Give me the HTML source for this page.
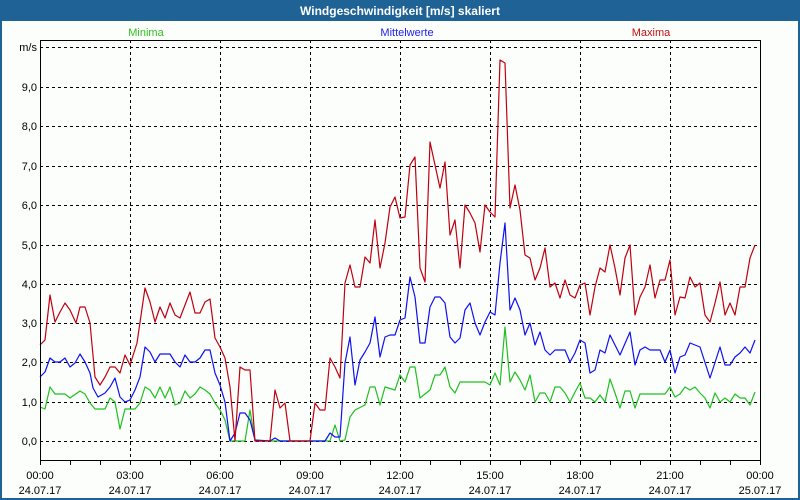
<!DOCTYPE html>
<html><head><meta charset="utf-8"><style>
html,body{margin:0;padding:0;background:#fff}
svg{display:block}
text{font-family:"Liberation Sans","DejaVu Sans",sans-serif;font-size:11px}
</style></head><body>
<svg width="800" height="500" viewBox="0 0 800 500" xmlns="http://www.w3.org/2000/svg">
<rect x="0" y="0" width="800" height="500" fill="#fcfefc"/>
<rect x="0" y="0" width="800" height="21" fill="#1e6296"/>
<rect x="0" y="0" width="2" height="500" fill="#1e6296"/>
<rect x="798" y="0" width="2" height="500" fill="#1e6296"/>
<rect x="0" y="498" width="800" height="2" fill="#1e6296"/>
<text x="400" y="15" text-anchor="middle" fill="#fff" font-weight="bold" style="font-size:12px">Windgeschwindigkeit [m/s] skaliert</text>
<text x="146" y="36" text-anchor="middle" fill="#30c020">Minima</text>
<text x="407" y="36" text-anchor="middle" fill="#2020f0">Mittelwerte</text>
<text x="651" y="36" text-anchor="middle" fill="#c01010">Maxima</text>
<g stroke="#000" stroke-width="1" stroke-dasharray="3,3" shape-rendering="crispEdges">
<line x1="40" y1="47.5" x2="760" y2="47.5"/>
<line x1="40" y1="87.5" x2="760" y2="87.5"/>
<line x1="40" y1="126.5" x2="760" y2="126.5"/>
<line x1="40" y1="166.5" x2="760" y2="166.5"/>
<line x1="40" y1="205.5" x2="760" y2="205.5"/>
<line x1="40" y1="245.5" x2="760" y2="245.5"/>
<line x1="40" y1="284.5" x2="760" y2="284.5"/>
<line x1="40" y1="323.5" x2="760" y2="323.5"/>
<line x1="40" y1="362.5" x2="760" y2="362.5"/>
<line x1="40" y1="402.5" x2="760" y2="402.5"/>
<line x1="40" y1="441.5" x2="760" y2="441.5"/>
<line x1="130.5" y1="40" x2="130.5" y2="460"/>
<line x1="220.5" y1="40" x2="220.5" y2="460"/>
<line x1="310.5" y1="40" x2="310.5" y2="460"/>
<line x1="400.5" y1="40" x2="400.5" y2="460"/>
<line x1="490.5" y1="40" x2="490.5" y2="460"/>
<line x1="580.5" y1="40" x2="580.5" y2="460"/>
<line x1="670.5" y1="40" x2="670.5" y2="460"/>
</g>
<g fill="none" stroke-width="1.2" stroke-linejoin="round">
<polyline stroke="#20c020" points="40,407 45,409 50,387 55,394 65,394 70,398 80,391 85,394 90,403 95,409 105,409 110,398 115,402 120,429 125,409 135,409 140,403 145,387 150,390 155,398 160,387 165,398 170,387 175,405 180,403 185,391 190,398 195,394 200,387 205,390 210,394 215,403 220,410 225,420 230,441 245,441 250,410 255,441 330,441 335,425 340,441 345,440 350,417 355,410 365,405 370,387 375,387 380,405 385,387 395,390 400,375 405,382 410,367 415,367 420,398 430,390 435,375 440,375 445,367 450,387 455,393 460,382 485,382 490,385 495,373 500,385 505,327 510,382 515,372 520,380 525,390 530,375 535,402 540,393 545,393 550,402 555,387 560,387 565,393 570,402 575,392 580,383 585,398 590,398 595,402 600,395 605,402 610,379 615,393 620,408 625,391 630,391 635,408 640,394 665,394 670,387 675,397 680,394 685,387 690,390 695,387 700,393 705,398 710,408 715,393 720,402 725,398 730,402 735,394 740,398 745,398 750,405 755,392"/>
<polyline stroke="#1010f0" points="40,377 45,372 50,358 55,362 60,362 65,358 70,367 75,363 80,354 85,362 90,373 93,388 98,397 105,393 110,387 115,378 120,397 125,402 130,400 135,390 140,377 145,347 150,352 155,362 160,354 170,354 175,362 180,367 185,355 190,362 195,362 200,358 205,350 210,350 215,373 220,385 225,402 230,441 235,433 240,413 245,413 250,420 255,440 270,441 275,438 280,441 325,441 330,433 335,437 340,437 345,363 350,337 355,385 360,360 365,352 370,343 375,317 380,357 385,337 390,335 395,335 400,320 405,318 410,277 415,297 420,343 425,343 430,307 435,297 440,297 445,303 450,337 455,343 460,338 465,310 470,303 475,323 480,335 485,322 490,312 495,315 500,263 505,223 510,310 515,298 520,310 525,335 530,323 535,345 540,332 545,350 550,355 555,350 565,350 570,362 575,353 580,340 585,343 590,373 595,370 600,350 605,353 610,335 620,355 630,332 635,365 640,350 645,347 650,350 660,350 665,362 670,350 675,373 680,357 685,355 690,343 700,347 710,378 720,347 725,365 730,365 735,357 740,353 745,347 750,353 755,340"/>
<polyline stroke="#c00010" points="40,345 45,340 50,295 55,322 60,312 65,303 70,310 76,323 80,307 85,307 90,323 95,377 100,385 105,377 110,367 115,367 120,373 125,355 130,365 137,343 145,288 150,302 155,322 160,307 165,318 170,303 175,315 180,318 190,292 195,313 200,313 205,302 210,299 215,338 220,347 225,358 230,387 235,441 240,367 245,370 250,370 255,441 270,441 275,390 280,408 285,403 290,441 310,441 315,403 320,410 325,410 330,358 335,367 340,378 345,283 350,265 355,287 360,287 365,257 370,263 375,220 380,268 385,243 390,207 395,197 400,218 405,217 410,165 415,157 420,268 425,282 430,142 435,165 440,188 445,162 450,235 455,220 460,268 465,205 470,213 475,223 480,252 485,205 490,212 495,217 500,60 505,63 510,208 515,185 520,210 525,255 530,258 535,280 540,268 545,248 550,287 555,283 560,298 565,280 570,295 575,298 580,285 585,283 590,315 595,287 600,268 605,272 610,245 615,268 620,295 625,258 630,245 635,315 640,297 645,287 650,265 655,298 660,280 665,280 670,260 675,315 680,297 685,298 690,277 695,287 700,283 705,315 710,322 715,303 720,282 725,315 730,303 735,315 740,287 745,287 750,258 755,245"/>
</g>
<rect x="40.5" y="40.5" width="720" height="420" fill="none" stroke="#000" stroke-width="1" shape-rendering="crispEdges"/>
<g stroke="#000" stroke-width="1" shape-rendering="crispEdges">
<line x1="70.5" y1="460" x2="70.5" y2="465"/><line x1="100.5" y1="460" x2="100.5" y2="465"/><line x1="130.5" y1="460" x2="130.5" y2="465"/><line x1="160.5" y1="460" x2="160.5" y2="465"/><line x1="190.5" y1="460" x2="190.5" y2="465"/><line x1="220.5" y1="460" x2="220.5" y2="465"/><line x1="250.5" y1="460" x2="250.5" y2="465"/><line x1="280.5" y1="460" x2="280.5" y2="465"/><line x1="310.5" y1="460" x2="310.5" y2="465"/><line x1="340.5" y1="460" x2="340.5" y2="465"/><line x1="370.5" y1="460" x2="370.5" y2="465"/><line x1="400.5" y1="460" x2="400.5" y2="465"/><line x1="430.5" y1="460" x2="430.5" y2="465"/><line x1="460.5" y1="460" x2="460.5" y2="465"/><line x1="490.5" y1="460" x2="490.5" y2="465"/><line x1="520.5" y1="460" x2="520.5" y2="465"/><line x1="550.5" y1="460" x2="550.5" y2="465"/><line x1="580.5" y1="460" x2="580.5" y2="465"/><line x1="610.5" y1="460" x2="610.5" y2="465"/><line x1="640.5" y1="460" x2="640.5" y2="465"/><line x1="670.5" y1="460" x2="670.5" y2="465"/><line x1="700.5" y1="460" x2="700.5" y2="465"/><line x1="730.5" y1="460" x2="730.5" y2="465"/><line x1="40.5" y1="460" x2="40.5" y2="465"/><line x1="760.5" y1="460" x2="760.5" y2="465"/>
</g>
<g fill="#000" text-anchor="end">
<text x="37" y="51">m/s</text>
<text x="37" y="91">9,0</text>
<text x="37" y="130">8,0</text>
<text x="37" y="170">7,0</text>
<text x="37" y="209">6,0</text>
<text x="37" y="249">5,0</text>
<text x="37" y="288">4,0</text>
<text x="37" y="327">3,0</text>
<text x="37" y="366">2,0</text>
<text x="37" y="406">1,0</text>
<text x="37" y="445">0,0</text>
</g>
<g fill="#000" text-anchor="middle">
<text x="40" y="479">00:00</text><text x="40" y="494">24.07.17</text>
<text x="130" y="479">03:00</text><text x="130" y="494">24.07.17</text>
<text x="220" y="479">06:00</text><text x="220" y="494">24.07.17</text>
<text x="310" y="479">09:00</text><text x="310" y="494">24.07.17</text>
<text x="400" y="479">12:00</text><text x="400" y="494">24.07.17</text>
<text x="490" y="479">15:00</text><text x="490" y="494">24.07.17</text>
<text x="580" y="479">18:00</text><text x="580" y="494">24.07.17</text>
<text x="670" y="479">21:00</text><text x="670" y="494">24.07.17</text>
<text x="760" y="479">00:00</text><text x="760" y="494">25.07.17</text>
</g>
</svg>
</body></html>
